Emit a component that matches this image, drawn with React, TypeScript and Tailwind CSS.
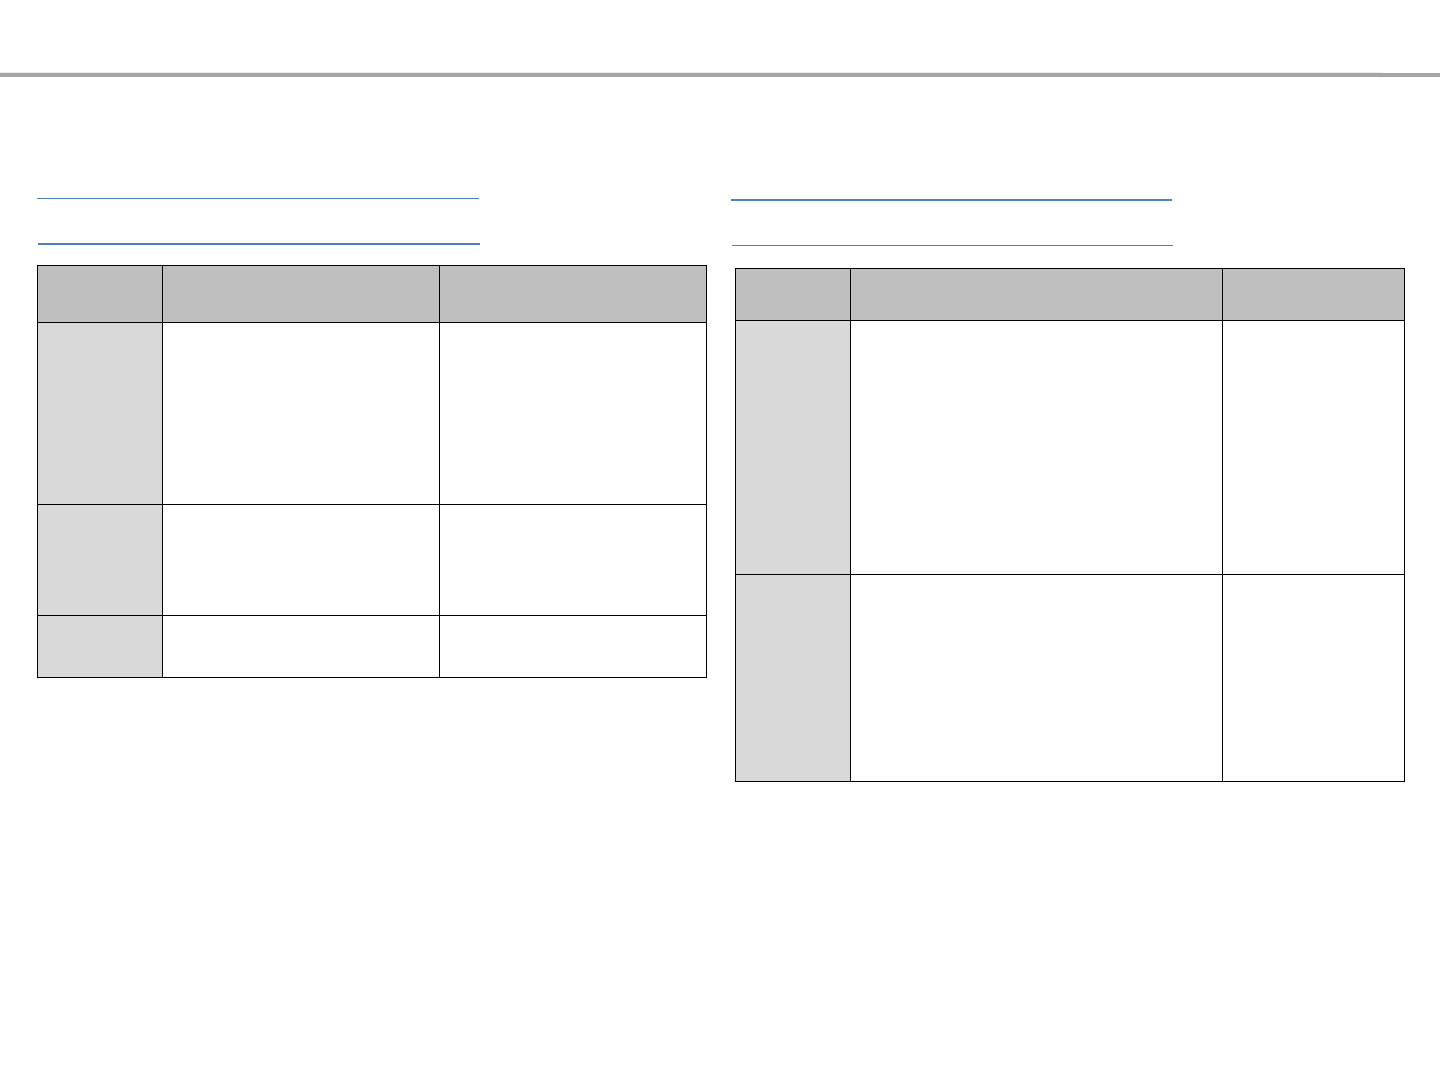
import React from "react";

export default function App() {
  return (
    <div className="w-[1440px] h-[1080px] bg-white font-['Liberation_Sans',sans-serif] overflow-hidden">
      <div className="h-[72px]" />
      <div className="h-px w-[1383px] bg-[#ededed]" />
      <div className="h-[4px] w-full bg-[#a6a6a6]" />
      <div className="flex items-start pt-[121px] pl-[37px]">
        {/* Left section */}
        <div className="flex flex-col w-[670px]">
          <div className="h-px w-[442px] bg-[#4f81bd]" />
          <div className="mt-[44px] ml-px h-[2px] w-[442px] bg-[#4f81bd]" />
          <div className="mt-[20px] grid grid-cols-[124px_276px_266px] grid-rows-[56px_181px_110px_61px] gap-px p-px bg-black w-[670px]">
            <div className="bg-[#bfbfbf]" />
            <div className="bg-[#bfbfbf]" />
            <div className="bg-[#bfbfbf]" />
            <div className="bg-[#d9d9d9]" />
            <div className="bg-white" />
            <div className="bg-white" />
            <div className="bg-[#d9d9d9]" />
            <div className="bg-white" />
            <div className="bg-white" />
            <div className="bg-[#d9d9d9]" />
            <div className="bg-white" />
            <div className="bg-white" />
          </div>
        </div>
        {/* Right section */}
        <div className="ml-[24px] mt-px flex flex-col">
          <div className="h-[2px] w-[441px] bg-[#4f81bd]" />
          <div className="mt-[44px] ml-px h-px w-[441px] bg-[#4f81bd]" />
          <div className="mt-[22px] ml-[4px] grid grid-cols-[114px_371px_181px] grid-rows-[51px_253px_206px] gap-px p-px bg-black w-[670px]">
            <div className="bg-[#bfbfbf]" />
            <div className="bg-[#bfbfbf]" />
            <div className="bg-[#bfbfbf]" />
            <div className="bg-[#d9d9d9]" />
            <div className="bg-white" />
            <div className="bg-white" />
            <div className="bg-[#d9d9d9]" />
            <div className="bg-white" />
            <div className="bg-white" />
          </div>
        </div>
      </div>
    </div>
  );
}
